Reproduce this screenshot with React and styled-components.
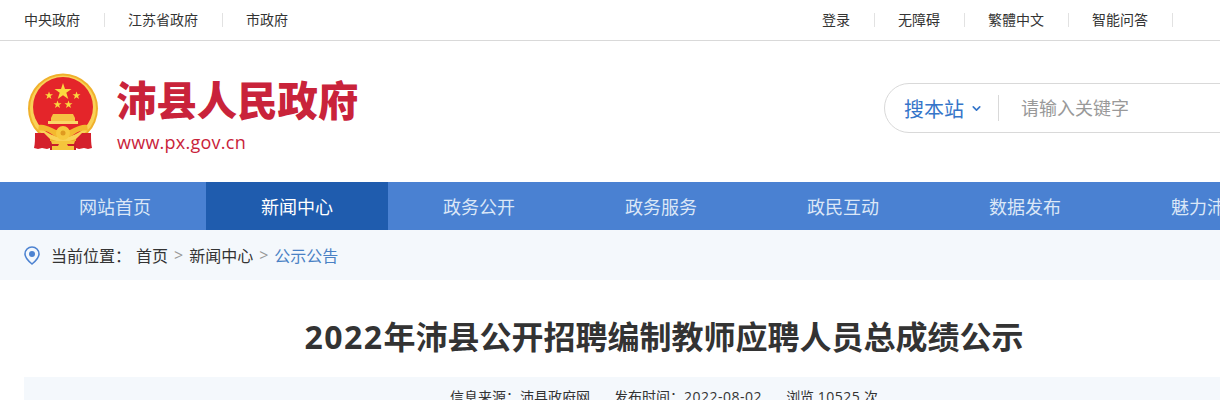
import styled, { createGlobalStyle } from "styled-components";
import { FiChevronDown } from "react-icons/fi";

const GlobalStyle = createGlobalStyle`
  html, body {
    margin: 0;
    padding: 0;
    overflow: hidden;
    background: #fff;
    font-family: "Open Sans", "Noto Sans CJK SC", sans-serif;
  }
  a { color: inherit; text-decoration: none; }
`;

const leftLinks = ["中央政府", "江苏省政府", "市政府"];
const rightLinks = ["登录", "无障碍", "繁體中文", "智能问答"];
const navItems = ["网站首页", "新闻中心", "政务公开", "政务服务", "政民互动", "数据发布", "魅力沛县"];

function Emblem() {
  return (
    <svg width="85" height="85" viewBox="0 0 85 85">
      <circle cx="43" cy="39.500" r="35" fill="#f0b12c" />
      <circle cx="43" cy="39.500" r="33" fill="#f9d257" />
      <circle cx="43" cy="38" r="30" fill="#e4252a" />
      <path d="M43 14l2 6h6.500l-5.200 3.800 2 6.200-5.300-3.800-5.300 3.800 2-6.200-5.200-3.800H41z" fill="#fbd93f" />
      <path d="M29 22.500l1 2.800h3l-2.400 1.800.9 2.900-2.500-1.800-2.500 1.800.9-2.900-2.400-1.800h3z" fill="#fbd93f" />
      <path d="M56.500 22.500l1 2.800h3l-2.400 1.800.9 2.900-2.500-1.800-2.500 1.800.9-2.900-2.400-1.800h3z" fill="#fbd93f" />
      <path d="M37.500 31.500l1 2.800h3l-2.400 1.800.9 2.900-2.500-1.800-2.500 1.800.9-2.900-2.400-1.800h3z" fill="#fbd93f" />
      <path d="M48.500 31.500l1 2.800h3l-2.400 1.800.9 2.900-2.500-1.800-2.500 1.800.9-2.900-2.400-1.800h3z" fill="#fbd93f" />
      <path d="M33 45h20l2 4v3H31v-3z" fill="#f6c243" />
      <path d="M28 52h30v3H28z" fill="#fbd768" />
      <path d="M15 64c0 6 0 11-1 15l4 1 4-1 5 1 3-1V70l-6-6z" fill="#d4202c" />
      <path d="M71 64c0 6 0 11 1 15l-4 1-4-1-5 1-3-1V70l6-6z" fill="#d4202c" />
      <path d="M30 72h26v9H30z" fill="#c81e2a" />
      <path d="M19 56c4-1 8 1 13 3l4 2h14l4-2c5-2 9-4 13-3l1 6c-5-1-9 0-12 2l-6 4H36l-6-4c-3-2-7-3-12-2z" fill="#f3b92f" />
      <circle cx="43" cy="64" r="7" fill="#f7c93f" />
      <circle cx="43" cy="64" r="2.500" fill="#e09a20" />
      <path d="M31 72h24l-1 3h-7l1 2h6v4H32v-4h6l1-2h-7z" fill="#f5c53c" />
    </svg>
  );
}

function PinIcon() {
  return (
    <svg width="16" height="19" viewBox="0 0 16 19">
      <path
        d="M8 1C4.100 1 1 4.100 1 8c0 4 3.800 7.400 7 10 3.200-2.600 7-6 7-10 0-3.900-3.100-7-7-7z"
        fill="none"
        stroke="#4d83d1"
        strokeWidth="1.600"
      />
      <circle cx="8" cy="8" r="3" fill="#4d83d1" />
    </svg>
  );
}

export default function App() {
  return (
    <Page>
      <GlobalStyle />
      <TopBar>
        <LinkGroup>
          {leftLinks.map((item, i) => (
            <TopLink key={item} $last={i === leftLinks.length - 1} href="#">
              {item}
            </TopLink>
          ))}
        </LinkGroup>
        <RightGroup>
          {rightLinks.map((item) => (
            <TopLink key={item} href="#">
              {item}
            </TopLink>
          ))}
        </RightGroup>
      </TopBar>

      <Header>
        <Logo>
          <Emblem />
          <LogoText>
            <LogoTitle>沛县人民政府</LogoTitle>
            <LogoUrl>www.px.gov.cn</LogoUrl>
          </LogoText>
        </Logo>
        <Search>
          <Scope>
            搜本站
            <FiChevronDown />
          </Scope>
          <Keyword placeholder="请输入关键字" />
        </Search>
      </Header>

      <Nav>
        {navItems.map((item) => (
          <NavItem key={item} $active={item === "新闻中心"} href="#">
            {item}
          </NavItem>
        ))}
      </Nav>

      <Crumbs>
        <PinIcon />
        <CrumbLabel>当前位置：</CrumbLabel>
        <Crumb href="#">首页</Crumb>
        <Arrow>&gt;</Arrow>
        <Crumb href="#">新闻中心</Crumb>
        <Arrow>&gt;</Arrow>
        <Crumb $current href="#">
          公示公告
        </Crumb>
      </Crumbs>

      <Article>
        <Title>
          <Year>2022</Year>年沛县公开招聘编制教师应聘人员总成绩公示
        </Title>
        <Meta>
          <span>信息来源：沛县政府网</span>
          <span>
            发布时间：<MetaNum>2022-08-02</MetaNum>
          </span>
          <span>
            浏览 <MetaNum>10525</MetaNum> 次
          </span>
        </Meta>
      </Article>
    </Page>
  );
}

const Page = styled.div`
  width: 1328px;
  height: 400px;
  overflow: hidden;
`;

const TopBar = styled.div`
  height: 40px;
  padding: 0 24px;
  display: flex;
  justify-content: space-between;
  align-items: center;
  border-bottom: 1px solid #d9d9d9;
`;

const LinkGroup = styled.div`
  display: flex;
  align-items: center;
`;

const RightGroup = styled(LinkGroup)`
  width: 482px;
`;

const TopLink = styled.a`
  font-size: 14px;
  line-height: 14px;
  color: #333;
  padding-right: 24px;
  margin-right: 23px;
  border-right: ${(p) => (p.$last ? "none" : "1px solid #e2e2e2")};
`;

const Header = styled.div`
  height: 141px;
  padding: 0 24px;
  display: flex;
  justify-content: space-between;
  align-items: center;
`;

const Logo = styled.div`
  display: flex;
  align-items: center;
  gap: 11px;
  margin-left: -4px;
`;

const LogoText = styled.div`
  display: flex;
  flex-direction: column;
  margin-top: 5px;
`;

const LogoTitle = styled.div`
  font-size: 40.4px;
  line-height: 52px;
  font-weight: 900;
  color: #c9233a;
`;

const LogoUrl = styled.div`
  font-size: 18px;
  line-height: 24px;
  letter-spacing: 0.25px;
  margin: 3px 0 0 1px;
  color: #c9233a;
`;

const Search = styled.div`
  width: 420px;
  height: 50px;
  box-sizing: border-box;
  border: 1px solid #d9d9d9;
  border-radius: 25px;
  display: flex;
  align-items: center;
  margin-top: -7px;
`;

const Scope = styled.div`
  display: flex;
  align-items: center;
  gap: 6px;
  height: 26px;
  padding: 0 15px 0 19px;
  margin-right: 20px;
  border-right: 1px solid #d9d9d9;
  font-size: 20px;
  color: #3575c9;
  svg {
    font-size: 13px;
    stroke-width: 3;
  }
`;

const Keyword = styled.input`
  border: 0;
  outline: 0;
  flex: 1;
  font-family: inherit;
  font-size: 18px;
  color: #333;
  &::placeholder {
    color: #999;
  }
`;

const Nav = styled.nav`
  height: 48px;
  padding-left: 24px;
  display: flex;
  background: #4a81d2;
`;

const NavItem = styled.a`
  width: 182px;
  flex: none;
  display: flex;
  align-items: center;
  justify-content: center;
  font-size: 18px;
  color: ${(p) => (p.$active ? "#fff" : "#dbe7f7")};
  background: ${(p) => (p.$active ? "#1f5cae" : "transparent")};
`;

const Crumbs = styled.div`
  height: 50px;
  padding-left: 24px;
  display: flex;
  align-items: center;
  background: #f4f8fc;
  font-size: 16px;
  color: #333;
`;

const CrumbLabel = styled.span`
  margin: 0 5px 0 11px;
`;

const Crumb = styled.a`
  color: ${(p) => (p.$current ? "#4a81c4" : "#333")};
`;

const Arrow = styled.span`
  margin: 0 6px;
  color: #999;
`;

const Article = styled.main`
  margin: 0 24px;
`;

const Title = styled.h1`
  margin: 0;
  padding-top: 35px;
  font-size: 32px;
  line-height: 44px;
  font-weight: 700;
  text-align: center;
  color: #333;
`;

const Year = styled.span`
  letter-spacing: 1.5px;
`;

const Meta = styled.div`
  margin-top: 18px;
  height: 60px;
  display: flex;
  justify-content: center;
  gap: 24px;
  padding-top: 8px;
  box-sizing: border-box;
  background: #f4f8fc;
  font-size: 14px;
  line-height: 24px;
  color: #333;
`;

const MetaNum = styled.span`
  letter-spacing: 0.5px;
`;
